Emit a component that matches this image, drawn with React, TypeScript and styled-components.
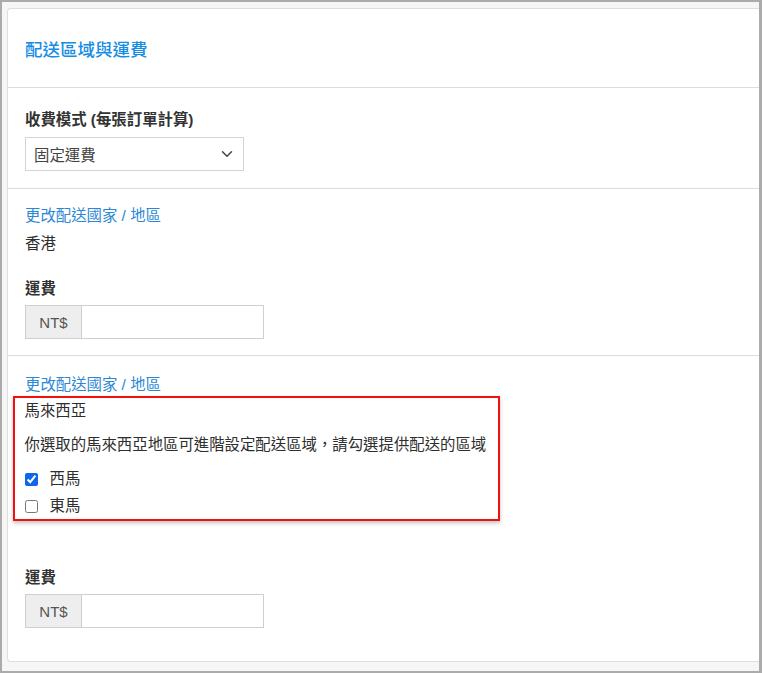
import React, { useState } from 'react';
import styled, { createGlobalStyle } from 'styled-components';
import { ChevronDown } from 'lucide-react';

const GlobalStyle = createGlobalStyle`
  html, body {
    margin: 0;
    padding: 0;
    background: #ababab;
  }
  body {
    font-family: "Liberation Sans", "Noto Sans CJK TC", sans-serif;
    color: #333;
  }
`;

const Frame = styled.div`
  margin: 2px 3px 2px 2px;
  height: 669px;
  background: #f6f6f6;
  padding: 6px 0 0 5px;
  box-sizing: border-box;
  overflow: hidden;
`;

const Card = styled.div`
  background: #fff;
  border: 1px solid #dedede;
  border-right: none;
  border-radius: 4px 0 0 4px;
  height: 654px;
  box-sizing: border-box;
`;

const CardHeader = styled.div`
  padding: 30px 17px 26px;
  border-bottom: 1px solid #dcdcdc;
  font-size: 17.5px;
  line-height: 22px;
  font-weight: 500;
  color: #168de4;
`;

const Section = styled.div<{ $top: number; $bottom: number; $last?: boolean }>`
  padding: ${(p) => p.$top}px 17px ${(p) => p.$bottom}px;
  border-bottom: ${(p) => (p.$last ? 'none' : '1px solid #dcdcdc')};
`;

const Label = styled.div<{ $gap?: number }>`
  font-size: 15.4px;
  line-height: 20px;
  font-weight: bold;
  color: #333;
  margin-top: ${(p) => p.$gap ?? 0}px;
  margin-bottom: 6px;
`;

const Text = styled.div<{ $gap?: number }>`
  font-size: 15.4px;
  line-height: 20px;
  color: #2e2e2e;
  margin-top: ${(p) => p.$gap ?? 0}px;
`;

const Link = styled.a`
  display: block;
  font-size: 15.4px;
  line-height: 20px;
  color: #2c88d6;
  text-decoration: none;
  cursor: pointer;
`;

const SelectBox = styled.div`
  width: 219px;
  height: 34px;
  margin-top: 7px;
  box-sizing: border-box;
  border: 1px solid #d4d4d4;
  display: flex;
  align-items: center;
  justify-content: space-between;
  padding: 0 7px 0 8px;
  font-size: 15.4px;
  color: #444;
  background: #fff;
`;

const InputGroup = styled.div`
  display: flex;
  width: 239px;
  height: 34px;
  box-sizing: border-box;
  border: 1px solid #cfcfcf;
`;

const Addon = styled.span`
  width: 55px;
  display: flex;
  align-items: center;
  justify-content: center;
  background: #eeeeee;
  border-right: 1px solid #cfcfcf;
  font-size: 15px;
  color: #555;
`;

const Field = styled.input`
  flex: 1;
  min-width: 0;
  border: none;
  outline: none;
  padding: 0 8px;
  font-size: 15px;
`;

const Highlight = styled.div`
  margin: 1px 0 0 -12px;
  width: 487px;
  box-sizing: border-box;
  border: 2.5px solid #f01010;
  box-shadow: 0 2px 4px rgba(0, 0, 0, 0.25);
  padding: 3px 10px 3px 9.5px;
`;

const CheckRow = styled.label<{ $gap: number }>`
  display: flex;
  align-items: center;
  gap: 12px;
  margin-top: ${(p) => p.$gap}px;
  font-size: 15.4px;
  line-height: 20px;
  color: #2e2e2e;
  cursor: pointer;

  input {
    width: 13px;
    height: 13px;
    margin: 0;
    accent-color: #0c66ee;
  }
`;

const FeeInput = () => (
  <InputGroup>
    <Addon>NT$</Addon>
    <Field type="text" />
  </InputGroup>
);

export default function App() {
  const [west, setWest] = useState(true);
  const [east, setEast] = useState(false);

  return (
    <>
      <GlobalStyle />
      <Frame>
        <Card>
          <CardHeader>配送區域與運費</CardHeader>

          <Section $top={22} $bottom={17}>
            <Label>收費模式 (每張訂單計算)</Label>
            <SelectBox>
              <span>固定運費</span>
              <ChevronDown size={18} strokeWidth={2} color="#444" />
            </SelectBox>
          </Section>

          <Section $top={17} $bottom={16}>
            <Link>更改配送國家 / 地區</Link>
            <Text $gap={8}>香港</Text>
            <Label $gap={25}>運費</Label>
            <FeeInput />
          </Section>

          <Section $top={19} $bottom={32} $last>
            <Link>更改配送國家 / 地區</Link>
            <Highlight>
              <Text>馬來西亞</Text>
              <Text $gap={14}>你選取的馬來西亞地區可進階設定配送區域，請勾選提供配送的區域</Text>
              <CheckRow $gap={14}>
                <input type="checkbox" checked={west} onChange={() => setWest(!west)} />
                西馬
              </CheckRow>
              <CheckRow $gap={7}>
                <input type="checkbox" checked={east} onChange={() => setEast(!east)} />
                東馬
              </CheckRow>
            </Highlight>
            <Label $gap={47}>運費</Label>
            <FeeInput />
          </Section>
        </Card>
      </Frame>
    </>
  );
}
